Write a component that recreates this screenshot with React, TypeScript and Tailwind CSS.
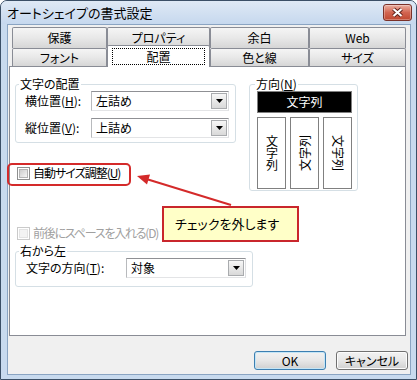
import type { ReactNode } from "react";

const jp = "font-['Noto_Sans_CJK_JP',sans-serif]";

function Checkbox({ disabled }: { disabled?: boolean }) {
  return (
    <span
      className={`flex h-[13px] w-[13px] shrink-0 items-center justify-center border bg-white ${
        disabled ? "border-[#cacaca]" : "border-[#8e8f8f]"
      }`}
    >
      <span
        className={`h-[9px] w-[9px] border ${
          disabled
            ? "border-[#e3e3e3] bg-[#f3f3f3]"
            : "border-[#b4b4b4] bg-linear-to-br from-[#cdcdcd] to-[#f5f5f5]"
        }`}
      />
    </span>
  );
}

function Combo({ value, className }: { value: string; className: string }) {
  return (
    <div
      className={`flex h-[20px] items-stretch border border-t-[#8f9094] border-l-[#b8babd] border-r-[#dedfe2] border-b-[#e3e4e6] bg-white ${className}`}
    >
      <span className="flex-1 pl-[4px] leading-[18px]">{value}</span>
      <span className="m-px flex w-[16px] items-center justify-center border border-[#a9abae] bg-linear-to-b from-[#f7f7f7] to-[#d9d9d9]">
        <svg width="7" height="4" viewBox="0 0 7 4">
          <path d="M0 0h7L3.5 4z" fill="#000" />
        </svg>
      </span>
    </div>
  );
}

function Tab({ children, className }: { children: ReactNode; className: string }) {
  return (
    <div
      className={`flex items-center justify-center rounded-t-[2px] border border-b-0 border-[#898c95] bg-linear-to-b from-[#f5f5f5] via-[#e8e8e8] to-[#d6d6d6] ${className}`}
    >
      {children}
    </div>
  );
}

function Button({ children, primary }: { children: ReactNode; primary?: boolean }) {
  return (
    <button
      className={`flex h-[19px] w-[72px] items-center justify-center rounded-[3px] border bg-linear-to-b from-[#f2f2f2] via-[#e7e7e7] to-[#d0d0d0] leading-[14px] ${
        primary
          ? "border-[#3c7fb1] shadow-[inset_0_0_0_1px_#c4e5f6]"
          : "border-[#707070] shadow-[inset_0_0_0_1px_#fcfcfc]"
      }`}
    >
      {children}
    </button>
  );
}

export default function App() {
  return (
    <div
      className={`h-[380px] w-[417px] ${jp} text-[12px] leading-[14px] text-black [font-feature-settings:'palt']`}
    >
      <div className="flex h-full w-full flex-col rounded-t-[7px] border border-[#3b4f66] bg-[#c8daee]">
        {/* title bar */}
        <div className="flex h-[23px] items-center justify-between rounded-t-[6px] bg-linear-to-b from-[#dfe9f5] to-[#c6d8ee] pl-[6px] pr-[4px]">
          <span className="text-[13px] leading-[16px]">オートシェイプの書式設定</span>
          <div className="flex h-[17px] w-[29px] items-center justify-center rounded-[3px] border border-[#7a3129] bg-linear-to-b from-[#eab0a2] via-[#d26551] to-[#c0472f] shadow-[inset_0_0_0_1px_rgba(255,255,255,0.3)]">
            <svg width="13" height="11" viewBox="0 0 13 11">
              <path d="M2.5 2 L10.5 9 M10.5 2 L2.5 9" stroke="#5c1f18" strokeWidth="4" />
              <path d="M2.5 2 L10.5 9 M10.5 2 L2.5 9" stroke="#fff" strokeWidth="2.2" />
            </svg>
          </div>
        </div>

        <div className="mb-[4px] ml-[6px] mr-[5px] flex flex-1 flex-col border border-[#8aa4c2] bg-[#f0f0f0]">
          {/* tabs */}
          <div className="ml-[4px] mt-[2px] flex h-[21px]">
            <Tab className="w-[95px]">保護</Tab>
            <Tab className="w-[103px]">プロパティ</Tab>
            <Tab className="w-[99px]">余白</Tab>
            <Tab className="w-[97px]">Web</Tab>
          </div>
          <div className="ml-[4px] flex h-[18px] items-start">
            <Tab className="h-[18px] w-[95px]">フォント</Tab>
            <div className="relative z-10 -mt-[3px] flex h-[22px] w-[103px] rounded-t-[2px] border border-b-0 border-[#898c95] bg-white">
              <div className="mx-[4px] mt-[2px] flex h-[17px] flex-1 items-center justify-center border border-dotted border-black">
                配置
              </div>
            </div>
            <Tab className="h-[18px] w-[99px]">色と線</Tab>
            <Tab className="h-[18px] w-[97px]">サイズ</Tab>
          </div>

          {/* panel */}
          <div className="relative ml-[1px] flex h-[270px] w-[397px] border border-[#898c95] bg-white pl-[5px] pt-[10px]">
            <div className="flex w-[221px] flex-col">
              <fieldset className="w-[221px] rounded-[3px] border border-[#d5dfe5]">
                <legend className="ml-[3px] px-[1px] leading-[14px]">文字の配置</legend>
                <div className="flex flex-col gap-[7px] pb-[4px] pl-[9px] pr-[6px]">
                  <div className="flex items-center">
                    <span className="w-[66px]">
                      横位置(<u>H</u>):
                    </span>
                    <Combo value="左詰め" className="w-[138px]" />
                  </div>
                  <div className="flex items-center">
                    <span className="w-[66px]">
                      縦位置(<u>V</u>):
                    </span>
                    <Combo value="上詰め" className="w-[138px]" />
                  </div>
                </div>
              </fieldset>

              <div className="relative ml-[2px] mt-[23px] flex h-[14px] items-center gap-[3px] self-start">
                <Checkbox />
                <span className="tracking-[-1px]">
                  自動サイズ調整(<u>U</u>)
                </span>
                <span className="absolute -bottom-[6px] -left-[10px] -right-[11px] -top-[3px] rounded-[5px] border-2 border-[#d42a2a]" />
              </div>

              <div className="ml-[2px] mt-[46px] flex h-[14px] items-center gap-[3px] text-[#a0a0a0]">
                <Checkbox disabled />
                <span className="whitespace-nowrap tracking-[-1.2px]">前後にスペースを入れる(D)</span>
              </div>

              <fieldset className="mt-[4px] w-[238px] shrink-0 rounded-[3px] border border-[#d5dfe5]">
                <legend className="ml-[3px] px-[1px] leading-[14px]">右から左</legend>
                <div className="flex items-center pb-[8px] pl-[10px] pr-[6px]">
                  <span className="w-[100px]">
                    文字の方向(<u>T</u>):
                  </span>
                  <Combo value="対象" className="w-[120px]" />
                </div>
              </fieldset>
            </div>

            <fieldset className="ml-[13px] w-[109px] self-start rounded-[3px] border border-[#d5dfe5]">
              <legend className="ml-[5px] px-[1px] leading-[14px]">
                方向(<u>N</u>)
              </legend>
              <div className="flex flex-col gap-[4px] pb-[1px] pl-[7px] pr-[5px]">
                <div className="flex h-[22px] w-[95px] items-center justify-center border border-[#808080] bg-black text-white">
                  文字列
                </div>
                <div className="flex h-[72px] gap-[4px]">
                  <div className="flex w-[29px] items-center justify-center border border-[#808080]">
                    <span className="leading-[12px] [writing-mode:vertical-rl]">文字列</span>
                  </div>
                  <div className="flex w-[29px] items-center justify-center border border-[#808080]">
                    <span className="-rotate-90 whitespace-nowrap">文字列</span>
                  </div>
                  <div className="flex w-[29px] items-center justify-center border border-[#808080]">
                    <span className="rotate-90 whitespace-nowrap">文字列</span>
                  </div>
                </div>
              </div>
            </fieldset>

            {/* annotation */}
            <svg className="pointer-events-none absolute inset-0 h-full w-full" viewBox="0 0 395 268">
              <line x1="221" y1="138" x2="138" y2="112.5" stroke="#d42a2a" strokeWidth="2" />
              <polygon points="127,109 140,107.5 137,117.5" fill="#d42a2a" />
            </svg>
            <div className="absolute left-[152px] top-[139px] flex h-[36px] w-[137px] items-center border-2 border-[#c9262c] bg-[#ffffc8] pl-[11px] text-[13px]">
              チェックを外します
            </div>
          </div>

          {/* buttons */}
          <div className="mt-[15px] flex justify-end gap-[10px] pr-[2px]">
            <Button primary>OK</Button>
            <Button>キャンセル</Button>
          </div>
        </div>
      </div>
    </div>
  );
}
